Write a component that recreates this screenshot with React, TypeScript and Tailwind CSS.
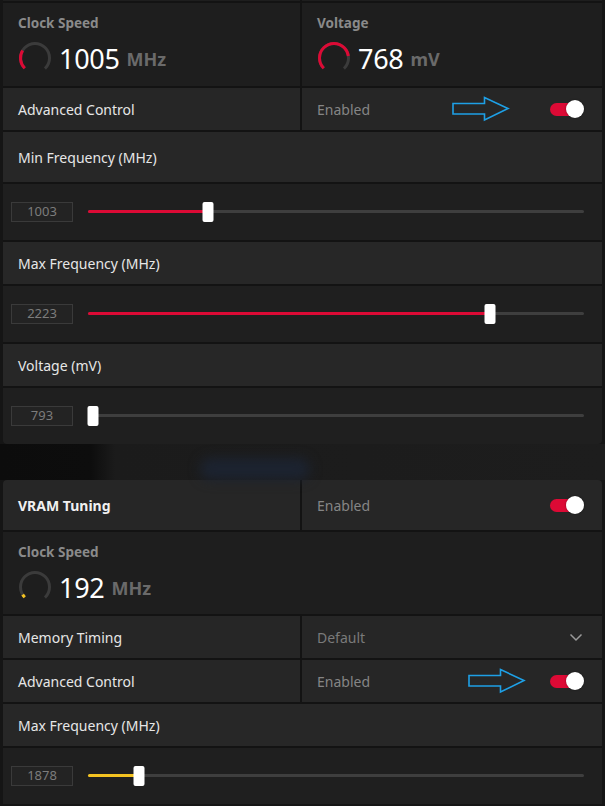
import React from 'react';

const RED = '#dc0a35';
const YELLOW = '#f3c221';

// Gauge ring: 270deg arc, gap at the bottom
const Gauge: React.FC<{ value: number; color: string }> = ({ value, color }) => {
  const r = 14.5;
  const c = 2 * Math.PI * r;
  const arc = c * 0.75;
  return (
    <svg width="36" height="36" viewBox="0 0 36 36" className="shrink-0">
      <circle
        cx="18"
        cy="18"
        r={r}
        fill="none"
        stroke="#3b3b3b"
        strokeWidth="3"
        strokeDasharray={`${arc} ${c}`}
        transform="rotate(135 18 18)"
      />
      <circle
        cx="18"
        cy="18"
        r={r}
        fill="none"
        stroke={color}
        strokeWidth="3"
        strokeDasharray={`${arc * value} ${c}`}
        transform="rotate(135 18 18)"
      />
    </svg>
  );
};

const Stat: React.FC<{ label: string; value: string; unit: string; fill: number; color: string }> = ({
  label,
  value,
  unit,
  fill,
  color,
}) => (
  <div className="h-full bg-[#1e1e1e] pl-[14px] pr-[15px] pt-[11px]">
    <div className="pl-[1px] text-[13.5px] font-bold leading-[18px] text-[#8a8a8a]">{label}</div>
    <div className="mt-[8px] flex items-center">
      <Gauge value={fill} color={color} />
      <span className="ml-[6px] text-[27px] leading-none tracking-[-0.3px] text-white">{value}</span>
      <span className="ml-[7px] mt-[2px] text-[18px] font-bold leading-none text-[#6a6a6a]">{unit}</span>
    </div>
  </div>
);

const Arrow: React.FC = () => (
  <svg width="58" height="26" viewBox="0 0 58 26" className="shrink-0">
    <path
      d="M1 7.5 H32.5 V1.5 L56 12.5 L32.5 24 V18 H1 Z"
      fill="none"
      stroke="#1ea0e6"
      strokeWidth="1.6"
      strokeLinejoin="miter"
    />
  </svg>
);

const Toggle: React.FC = () => (
  <div className="relative h-[18px] w-[34px] shrink-0">
    <div className="absolute left-0 top-[3px] h-[13px] w-[30px] rounded-full" style={{ background: RED }} />
    <div className="absolute right-0 top-0 h-[18px] w-[18px] rounded-full bg-white shadow-[0_0_2px_rgba(0,0,0,0.5)]" />
  </div>
);

const Chevron: React.FC = () => (
  <svg width="14" height="9" viewBox="0 0 14 9">
    <path d="M1.5 1.5 L7 7 L12.5 1.5" fill="none" stroke="#9a9a9a" strokeWidth="1.5" />
  </svg>
);

const SplitRow: React.FC<{ h: string; left: React.ReactNode; right: React.ReactNode }> = ({ h, left, right }) => (
  <div className={`grid grid-cols-[297px_1fr] gap-[2px] ${h}`}>
    <div className="flex items-center bg-[#262626] pl-[15px]">{left}</div>
    <div className="flex items-center bg-[#262626] pl-[15px] pr-[18px]">{right}</div>
  </div>
);

const LabelRow: React.FC<{ text: string; h?: string }> = ({ text, h = 'h-[42px]' }) => (
  <div className={`flex items-center bg-[#272727] pl-[15px] text-[14px] text-[#e6e6e6] ${h}`}>{text}</div>
);

const SliderRow: React.FC<{ value: string; pct: number; color?: string }> = ({ value, pct, color = RED }) => (
  <div className="flex h-[56px] items-center bg-[#1f1f1f] pl-[8px] pr-[18px]">
    <div className="flex h-[20px] w-[62px] shrink-0 items-center justify-center border border-[#3a3a3a] bg-[#232323] text-[13px] text-[#7c7c7c]">
      {value}
    </div>
    <div className="relative ml-[15px] h-[20px] flex-1">
      <div className="absolute left-0 right-0 top-[8px] h-[3px] rounded-full bg-[#3e3e3e]" />
      <div
        className="absolute left-0 top-[8px] h-[3px] rounded-full"
        style={{ width: `${pct}%`, background: color }}
      />
      <div
        className="absolute top-0 h-[20px] w-[11px] -translate-x-1/2 rounded-[2px] bg-white"
        style={{ left: `${pct}%`, marginLeft: pct < 2 ? '5px' : 0 }}
      />
    </div>
  </div>
);

export default function App() {
  return (
    <div
      className="h-[806px] w-[605px] overflow-hidden bg-[#151515]"
      style={{ fontFamily: '"Noto Sans", "Open Sans", sans-serif' }}
    >
      {/* first card, scrolled so its top lies just above the window */}
      <div className="mx-[3px] flex flex-col gap-[2px] overflow-hidden rounded-b-[4px] bg-[#131313]">
        <div className="grid h-[1px] grid-cols-[297px_1fr] gap-[2px]">
          <div className="bg-[#1e1e1e]" />
          <div className="bg-[#1e1e1e]" />
        </div>
        <div className="grid h-[83px] grid-cols-[297px_1fr] gap-[2px]">
          <Stat label="Clock Speed" value="1005" unit="MHz" fill={0.28} color={RED} />
          <Stat label="Voltage" value="768" unit="mV" fill={0.8} color={RED} />
        </div>
        <SplitRow
          h="h-[42px]"
          left={<span className="text-[14px] text-[#e6e6e6]">Advanced Control</span>}
          right={
            <>
              <span className="text-[14px] text-[#858585]">Enabled</span>
              <div className="ml-auto mr-[40px]">
                <Arrow />
              </div>
              <Toggle />
            </>
          }
        />
        <LabelRow text="Min Frequency (MHz)" h="h-[50px]" />
        <SliderRow value="1003" pct={24.2} />
        <LabelRow text="Max Frequency (MHz)" />
        <SliderRow value="2223" pct={81} />
        <LabelRow text="Voltage (mV)" />
        <SliderRow value="793" pct={0} />
      </div>

      {/* blurred backdrop between the cards */}
      <div className="relative h-[36px] bg-[linear-gradient(to_right,#0c0c0c_0%,#0d0d0d_15%,#1b1b1b_19%,#1d1d1d_100%)]">
        <div className="absolute left-[200px] top-[14px] h-[22px] w-[110px] rounded-full bg-[#1c2330] blur-[6px]" />
      </div>

      <div className="mx-[3px] flex flex-col gap-[2px] overflow-hidden rounded-t-[4px] bg-[#131313]">
        <SplitRow
          h="h-[50px]"
          left={<span className="text-[14px] font-bold text-[#f0f0f0]">VRAM Tuning</span>}
          right={
            <>
              <span className="text-[14px] text-[#858585]">Enabled</span>
              <div className="ml-auto">
                <Toggle />
              </div>
            </>
          }
        />
        <div className="h-[82px]">
          <Stat label="Clock Speed" value="192" unit="MHz" fill={0.05} color={YELLOW} />
        </div>
        <SplitRow
          h="h-[42px]"
          left={<span className="text-[14px] text-[#e6e6e6]">Memory Timing</span>}
          right={
            <>
              <span className="text-[14px] text-[#7a7a7a]">Default</span>
              <div className="ml-auto mr-[1px]">
                <Chevron />
              </div>
            </>
          }
        />
        <SplitRow
          h="h-[42px]"
          left={<span className="text-[14px] text-[#e6e6e6]">Advanced Control</span>}
          right={
            <>
              <span className="text-[14px] text-[#858585]">Enabled</span>
              <div className="ml-auto mr-[24px]">
                <Arrow />
              </div>
              <Toggle />
            </>
          }
        />
        <LabelRow text="Max Frequency (MHz)" />
        <SliderRow value="1878" pct={10.3} color={YELLOW} />
      </div>
    </div>
  );
}
